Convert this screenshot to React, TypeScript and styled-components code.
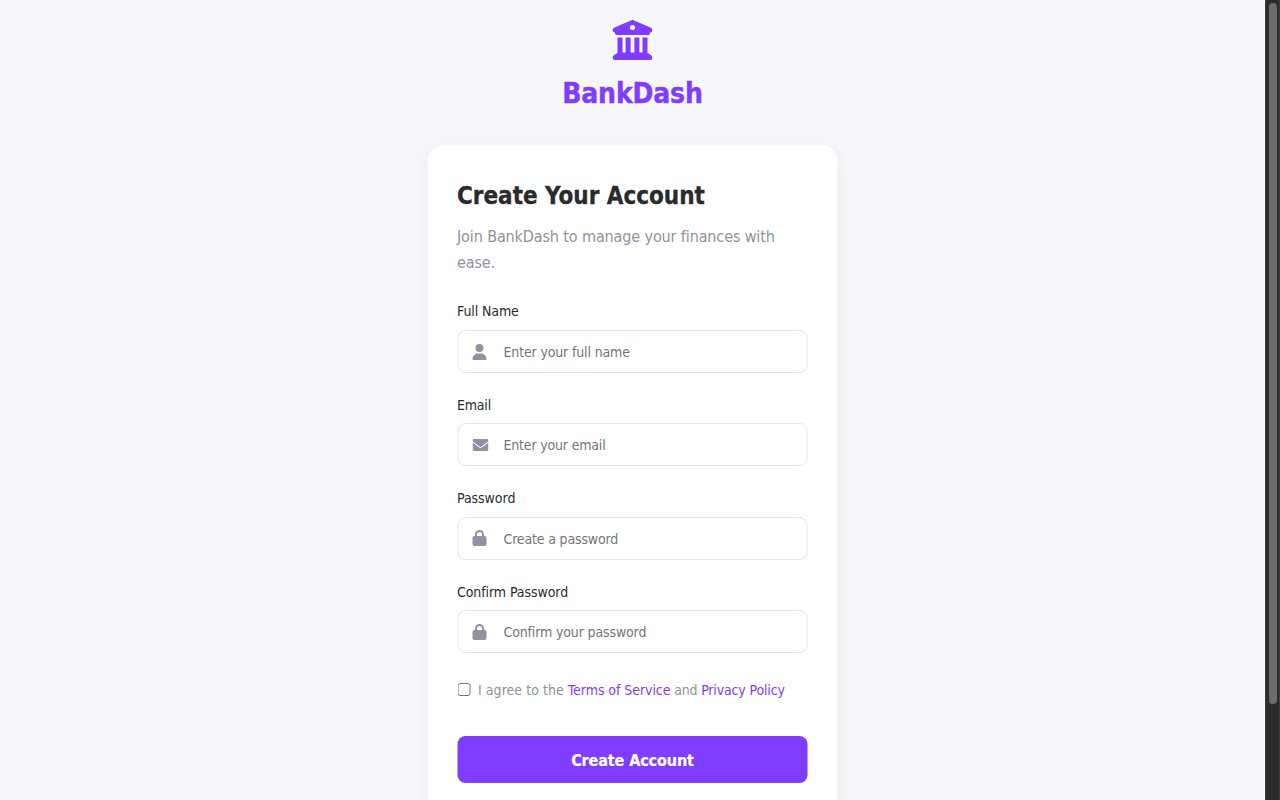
import React from "react";
import styled, { createGlobalStyle } from "styled-components";
import { FaBuildingColumns, FaUser, FaEnvelope, FaLock } from "react-icons/fa6";

const GlobalStyle = createGlobalStyle`
  * { box-sizing: border-box; margin: 0; padding: 0; }
  body {
    font-family: "DejaVu Sans Condensed", "DejaVu Sans", sans-serif;
    font-stretch: condensed;
    line-height: 1.6;
    color: #292b2d;
    background: #f5f7fb;
    overflow: hidden;
  }
`;

const Screen = styled.div`
  display: flex;
  height: 800px;
  overflow: hidden;
`;

const Page = styled.main`
  flex: 1;
  min-width: 0;
  padding-top: 20px;
  display: flex;
  flex-direction: column;
  align-items: center;
  transform: translateX(-0.5px);
`;

const ScrollTrack = styled.div`
  width: 15px;
  padding: 3px 3px 0 3px;
  background: #2b2b2b;
  border-left: 1px solid #3d3d3d;
  border-right: 1px solid #3d3d3d;
`;

const ScrollThumb = styled.div`
  width: 8px;
  height: 701px;
  border-radius: 4px;
  background: #6b6b6b;
`;

const Logo = styled.header`
  display: flex;
  flex-direction: column;
  align-items: center;
  color: #7f3dff;
  margin-bottom: 30px;
`;

const LogoIcon = styled(FaBuildingColumns)`
  width: 40px;
  height: 40px;
  margin-bottom: 10px;
`;

const LogoName = styled.h1`
  font-size: 28px;
  line-height: 42px;
  padding: 3px 0 0 1px;
  font-weight: 700;
  letter-spacing: -0.15px;
  -webkit-text-stroke: 0.4px currentColor;
`;

const Card = styled.section`
  flex: none;
  width: 410px;
  height: 760px;
  padding: 30px;
  border-radius: 16px;
  background: #fff;
  box-shadow: 0 4px 20px rgba(0, 0, 0, 0.05);
`;

const Title = styled.h2`
  font-size: 24px;
  font-weight: 700;
  line-height: 38px;
  padding-top: 2px;
  margin-bottom: 9px;
  letter-spacing: -0.02px;
  white-space: nowrap;
  -webkit-text-stroke: 0.3px currentColor;
`;

const Intro = styled.p`
  font-size: 16px;
  line-height: 25.6px;
  color: #91919f;
  margin-bottom: 24.4px;
  letter-spacing: -0.12px;
`;

const Field = styled.div`
  margin-bottom: 20px;
`;

const Label = styled.label<{ $track: number }>`
  display: block;
  font-size: 14px;
  line-height: 22px;
  padding-top: 0.75px;
  margin-bottom: 7.65px;
  letter-spacing: ${(p) => p.$track}px;
`;

const InputBox = styled.div`
  display: flex;
  align-items: center;
  height: 43px;
  padding-left: 13px;
  border: 1px solid #e3e3e6;
  border-radius: 8px;
  color: #91919f;
`;

const IconSlot = styled.span<{ $inset: number }>`
  display: flex;
  width: 32.5px;
  padding: 0.3px 0 0 ${(p) => p.$inset}px;
  svg { height: 16px; width: auto; }
`;

const Input = styled.input<{ $track: number }>`
  flex: 1;
  min-width: 0;
  border: 0;
  outline: 0;
  background: transparent;
  font: inherit;
  font-size: 14px;
  line-height: 17px;
  padding-top: 2px;
  letter-spacing: ${(p) => p.$track}px;
  &::placeholder { color: #757575; }
`;

const Terms = styled.div`
  display: flex;
  align-items: center;
  margin: 25px 0 35px;
  height: 22.4px;
  color: #91919f;
  font-size: 14px;
  white-space: nowrap;
  letter-spacing: -0.2px;
`;

const Check = styled.input`
  width: 13px;
  height: 13px;
  margin-right: 8px;
`;

const TermsText = styled.span`
  padding-top: 1.6px;
`;

const Lead = styled.span`
  letter-spacing: 0.05px;
`;

const Link = styled.a<{ $track: number }>`
  color: #7f3dff;
  text-decoration: none;
  letter-spacing: ${(p) => p.$track}px;
`;

const Submit = styled.button`
  display: block;
  width: 100%;
  height: 47px;
  padding: 3px 0 0 1px;
  border: 0;
  border-radius: 8px;
  background: #7f3dff;
  color: #fff;
  font: inherit;
  font-size: 16px;
  font-weight: 700;
  letter-spacing: -0.11px;
  -webkit-text-stroke: 0.2px currentColor;
`;

const fields = [
  { label: "Full Name", hint: "Enter your full name", Icon: FaUser, inset: 0, lt: -0.1, ht: -0.15 },
  { label: "Email", hint: "Enter your email", Icon: FaEnvelope, inset: 1, lt: -0.2, ht: -0.18 },
  { label: "Password", hint: "Create a password", Icon: FaLock, inset: 0, lt: -0.05, ht: -0.16 },
  { label: "Confirm Password", hint: "Confirm your password", Icon: FaLock, inset: 0, lt: -0.08, ht: -0.14 },
];

export default function App() {
  return (
    <>
      <GlobalStyle />
      <Screen>
        <Page>
          <Logo>
            <LogoIcon />
            <LogoName>BankDash</LogoName>
          </Logo>
          <Card>
            <Title>Create Your Account</Title>
            <Intro>Join BankDash to manage your finances with ease.</Intro>
            {fields.map(({ label, hint, Icon, inset, lt, ht }) => (
              <Field key={label}>
                <Label $track={lt}>{label}</Label>
                <InputBox>
                  <IconSlot $inset={inset}><Icon /></IconSlot>
                  <Input placeholder={hint} $track={ht} />
                </InputBox>
              </Field>
            ))}
            <Terms>
              <Check type="checkbox" />
              <TermsText>
                <Lead>I agree to the </Lead>
                <Link $track={-0.06}>Terms of Service</Link> and{" "}
                <Link $track={-0.15}>Privacy Policy</Link>
              </TermsText>
            </Terms>
            <Submit>Create Account</Submit>
          </Card>
        </Page>
        <ScrollTrack>
          <ScrollThumb />
        </ScrollTrack>
      </Screen>
    </>
  );
}
